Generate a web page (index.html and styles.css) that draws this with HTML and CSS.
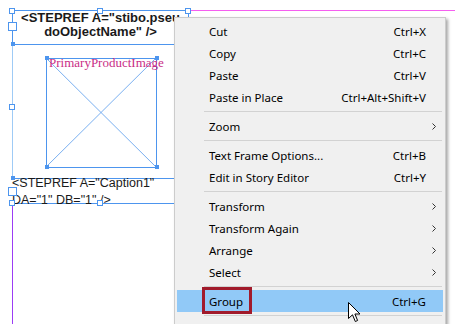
FILE: index.html
```html
<!DOCTYPE html>
<html lang="en">
<head>
  <meta charset="UTF-8" />
  <meta name="viewport" content="width=device-width, initial-scale=1" />
  <title>Layout context menu</title>
  <link rel="stylesheet" href="styles.css">
</head>
<body>

  <div class="canvas">
    <div class="guide-magenta"></div>
    <div class="guide-blue"></div>
    <div class="guide-purple"></div>

    <div class="frame name-frame">
      <div class="name-text">&lt;STEPREF A="stibo.pseu<br>doObjectName" /&gt;</div>
    </div>

    <div class="frame image-frame">
      <svg class="cross" width="110" height="109" viewBox="0 0 110 109">
        <line x1="0" y1="0" x2="110" y2="109" />
        <line x1="110" y1="0" x2="0" y2="109" />
      </svg>
    </div>
    <div class="image-label">PrimaryProductImage</div>

    <div class="frame caption-frame"></div>
    <div class="caption-text">&lt;STEPREF A="Caption1"<br>DA="1" DB="1" /&gt;</div>

    <!-- handles -->
    <span class="handle h1"></span>
    <span class="handle h2"></span>
    <span class="handle h3"></span>
    <span class="handle h4"></span>
    <span class="handle h5"></span>
    <span class="handle h6"></span>
    <span class="handle big b1"></span>
    <span class="handle big b2"></span>
    <span class="dot d1"></span>
    <span class="dot d2"></span>
    <span class="dot d3"></span>
    <span class="dot d4"></span>
    <span class="dot d5"></span>
    <span class="dot d6"></span>
  </div>

  <ul class="menu">
    <li class="item"><span class="label">Cut</span><span class="key">Ctrl+X</span><span class="sub"></span></li>
    <li class="item"><span class="label">Copy</span><span class="key">Ctrl+C</span><span class="sub"></span></li>
    <li class="item"><span class="label">Paste</span><span class="key">Ctrl+V</span><span class="sub"></span></li>
    <li class="item"><span class="label">Paste in Place</span><span class="key">Ctrl+Alt+Shift+V</span><span class="sub"></span></li>
    <li class="sep"></li>
    <li class="item"><span class="label">Zoom</span><span class="sub"><svg width="4" height="7" viewBox="0 0 4 7"><polyline points="0.5,0.5 3.5,3.5 0.5,6.5" /></svg></span></li>
    <li class="sep"></li>
    <li class="item"><span class="label">Text Frame Options...</span><span class="key">Ctrl+B</span><span class="sub"></span></li>
    <li class="item"><span class="label">Edit in Story Editor</span><span class="key">Ctrl+Y</span><span class="sub"></span></li>
    <li class="sep"></li>
    <li class="item"><span class="label">Transform</span><span class="sub"><svg width="4" height="7" viewBox="0 0 4 7"><polyline points="0.5,0.5 3.5,3.5 0.5,6.5" /></svg></span></li>
    <li class="item"><span class="label">Transform Again</span><span class="sub"><svg width="4" height="7" viewBox="0 0 4 7"><polyline points="0.5,0.5 3.5,3.5 0.5,6.5" /></svg></span></li>
    <li class="item"><span class="label">Arrange</span><span class="sub"><svg width="4" height="7" viewBox="0 0 4 7"><polyline points="0.5,0.5 3.5,3.5 0.5,6.5" /></svg></span></li>
    <li class="item"><span class="label">Select</span><span class="sub"><svg width="4" height="7" viewBox="0 0 4 7"><polyline points="0.5,0.5 3.5,3.5 0.5,6.5" /></svg></span></li>
    <li class="sep"></li>
    <li class="item active"><span class="label">Group</span><span class="key">Ctrl+G</span><span class="sub"></span><span class="callout"></span></li>
    <li class="sep"></li>
  </ul>

  <svg class="cursor" width="13" height="21" viewBox="0 0 13 21">
    <path d="M0.5 0.5 L0.5 16.5 L4.5 12.8 L7.3 19.5 L9.6 18.5 L6.9 12 L12 12 Z" />
  </svg>

</body>
</html>
```

FILE: styles.css
```css
html, body {
  margin: 0;
  padding: 0;
}
body {
  width: 455px;
  height: 324px;
  overflow: hidden;
  position: relative;
  background: #ffffff;
  font-family: "Liberation Sans", Arial, sans-serif;
}

/* layout canvas */
.canvas {
  position: relative;
  width: 455px;
  height: 324px;
}
.guide-magenta {
  position: absolute;
  left: 190px;
  top: 10px;
  width: 265px;
  height: 1px;
  background: #f55ff0;
}
.guide-blue {
  position: absolute;
  left: 12px;
  top: 44px;
  width: 1px;
  height: 134px;
  background: #9fcbf6;
}
.guide-purple {
  position: absolute;
  left: 12px;
  top: 203px;
  width: 1px;
  height: 121px;
  background: #9b3cf5;
}
.frame {
  position: absolute;
  box-sizing: border-box;
  border: 1px solid #4d95ee;
}
.name-frame {
  left: 12px;
  top: 10px;
  width: 177px;
  height: 35px;
}
.name-text {
  position: absolute;
  left: -1px;
  top: 0;
  width: 177px;
  text-align: center;
  font-weight: bold;
  font-size: 13px;
  line-height: 14px;
  color: #1a1a1a;
}
.image-frame {
  left: 46px;
  top: 58px;
  width: 111px;
  height: 110px;
}
.cross {
  position: absolute;
  left: -1px;
  top: -1px;
}
.cross line {
  stroke: #6aa6ee;
  stroke-width: 0.9;
}
.image-label {
  position: absolute;
  left: 49px;
  top: 56px;
  font-family: "Liberation Serif", "Times New Roman", serif;
  font-size: 13px;
  line-height: 14px;
  color: #c92d86;
  white-space: nowrap;
}
.caption-frame {
  left: 12px;
  top: 178px;
  width: 200px;
  height: 26px;
  border-left: none;
}
.caption-text {
  position: absolute;
  left: 12px;
  top: 175px;
  font-size: 12.5px;
  line-height: 16.5px;
  color: #1a1a1a;
  white-space: nowrap;
}

/* selection handles */
.handle {
  position: absolute;
  box-sizing: border-box;
  width: 6px;
  height: 6px;
  background: #ffffff;
  border: 1px solid #4d95ee;
}
.handle.big {
  width: 9px;
  height: 9px;
}
.h1 { left: 9px; top: 8px; }
.h2 { left: 97px; top: 8px; }
.h3 { left: 185px; top: 8px; }
.h4 { left: 9px; top: 104px; }
.h5 { left: 9px; top: 200px; }
.h6 { left: 97px; top: 200px; }
.b1 { left: 8px; top: 22px; }
.b2 { left: 8px; top: 187px; }
.dot {
  position: absolute;
  width: 4px;
  height: 4px;
  background: #4d95ee;
}
.d1 { left: 11px; top: 42px; }
.d2 { left: 11px; top: 176px; }
.d3 { left: 45px; top: 56px; }
.d4 { left: 155px; top: 56px; }
.d5 { left: 45px; top: 165px; }
.d6 { left: 155px; top: 165px; }

/* context menu */
.menu {
  position: absolute;
  left: 174px;
  top: 17px;
  width: 266px;
  margin: 0;
  padding: 2px 2px 24px;
  list-style: none;
  background: #f0f0f0;
  border: 1px solid #cccccc;
  box-shadow: 2px 2px 3px rgba(0, 0, 0, 0.35);
  font-family: "Noto Sans", "Open Sans", sans-serif;
  font-size: 11.5px;
  color: #000000;
}
.item {
  position: relative;
  display: flex;
  align-items: center;
  height: 22px;
  padding-left: 32px;
}
.label {
  flex: 1;
  white-space: nowrap;
}
.key {
  white-space: nowrap;
}
.sub {
  width: 17px;
  display: flex;
  align-items: center;
  padding-left: 6px;
  box-sizing: border-box;
}
.sub polyline {
  fill: none;
  stroke: #333333;
  stroke-width: 1;
}
.sep {
  height: 1px;
  margin: 3px 1px 3px 27px;
  background: #d2d2d2;
}
.item.active {
  background: #91c9f7;
}
.callout {
  position: absolute;
  left: 25px;
  top: -3px;
  width: 50px;
  height: 27px;
  box-sizing: border-box;
  border: 3px solid #a11a2b;
}

.cursor {
  position: absolute;
  left: 348px;
  top: 302px;
}
.cursor path {
  fill: #ffffff;
  stroke: #000000;
  stroke-width: 1;
  stroke-linejoin: miter;
}
```
